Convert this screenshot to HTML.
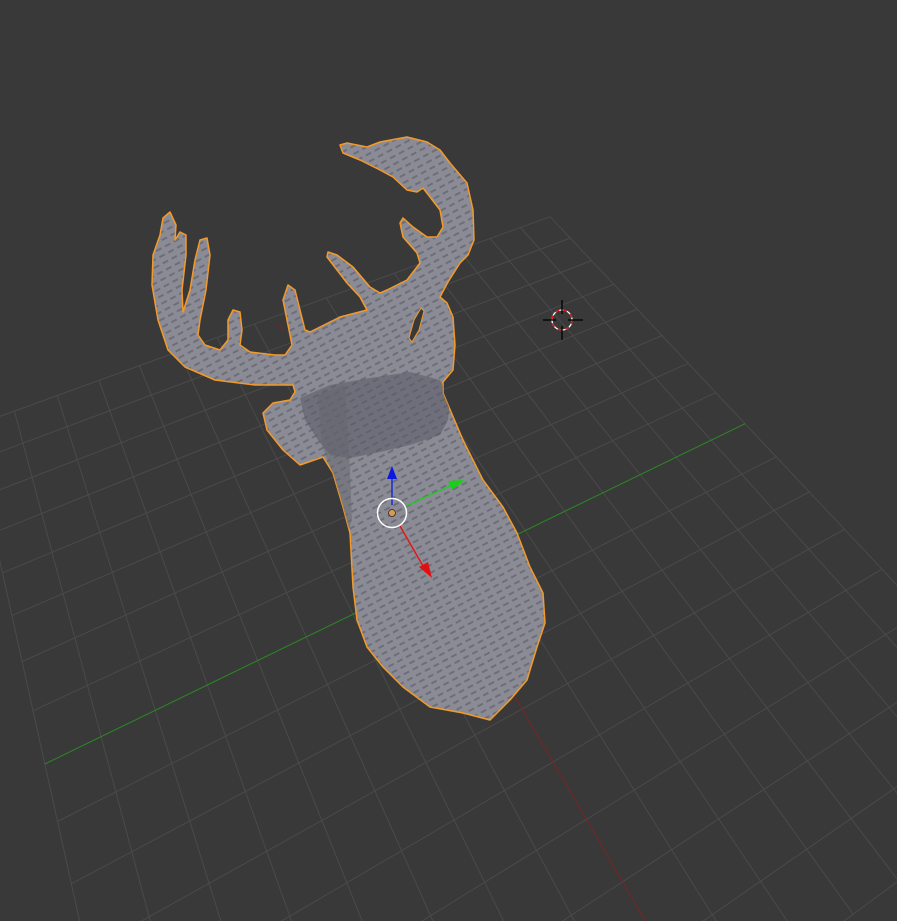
<!DOCTYPE html>
<html><head><meta charset="utf-8"><style>
html,body{margin:0;padding:0;background:#393939;width:897px;height:921px;overflow:hidden}
svg{display:block}
</style></head><body>
<svg id="s" width="897" height="921" viewBox="0 0 897 921" xmlns="http://www.w3.org/2000/svg">
<defs>
<pattern id="vox" width="10" height="7" patternUnits="userSpaceOnUse" patternTransform="rotate(-28)">
<rect width="10" height="7" fill="#8b8b95"/>
<rect x="0" y="0" width="6" height="2" fill="#6e6e7a"/>
</pattern>
<clipPath id="dc"><use href="#deer"/></clipPath>
</defs>
<rect width="897" height="921" fill="#393939"/>
<g id="grid" stroke="#4a4a4a" stroke-width="1" fill="none"></g>
<g id="axes" fill="none"></g>
<path id="deer" fill="url(#vox)" stroke="#f39a2a" stroke-width="1.5" stroke-linejoin="round" d="
M293,385 L255,385 L215,380 L185,367 L168,350 L158,320 L152,285 L153,255 L160,235 L163,218 L170,212 L176,225 L175,240 L180,232 L186,235 L186,255 L182,290 L183,312 L190,290 L195,260 L200,240 L207,238 L210,255 L206,290 L200,320 L198,335 L205,345 L220,350 L228,340 L228,320 L233,310 L240,312 L242,330 L240,345 L250,352 L275,355 L285,355 L292,345 L287,320 L283,300 L288,285 L295,290 L300,310 L305,330 L310,332
L340,317 L367,310 L360,297 L347,283 L337,270 L327,257 L328,252 L337,255 L353,267 L370,287 L380,293 L387,290 L407,280 L420,263 L417,253 L403,237 L400,223 L403,218 L413,227 L427,237 L437,237 L443,227 L440,210 L430,197 L423,188 L417,192 L407,190 L393,177 L380,170 L360,160 L343,153 L340,145 L347,143 L367,147 L380,142 L407,137 L427,142 L440,150 L450,163 L467,183 L473,210 L474,240 L468,255 L460,263 L448,282 L440,297
L447,303 L453,317 L455,345 L453,370 L443,382 L443,393 L463,440 L483,480 L503,507 L517,533 L530,567 L543,593 L545,623 L537,647 L527,680 L510,700 L490,720 L463,713 L430,707 L403,687 L383,667 L367,647 L357,620 L353,587 L350,533 L343,507 L333,473 L323,457
L300,465 L283,450 L267,430 L263,413 L273,403 L290,400 L295,392 Z"/>
<g clip-path="url(#dc)">
<path fill="#5a5a66" opacity="0.55" d="M300,398 L330,385 L370,378 L410,372 L440,380 L450,400 L448,420 L440,435 L410,445 L380,452 L350,458 L330,455 L318,440 L305,420 Z"/>
<path fill="#66666e" opacity="0.5" d="M318,395 L345,385 L350,470 L352,520 L345,540 L335,480 L322,445 Z"/>
</g>
<path fill="#393939" stroke="#f39a2a" stroke-width="1" d="M409,338 L414,320 L421,308 L424,311 L419,330 L412,342 Z"/>
<line x1="278" y1="323" x2="284" y2="332" stroke="#7a2424" stroke-width="1"/>
<g>
<line x1="392" y1="505" x2="392" y2="478" stroke="#1a2bd0" stroke-width="1.5"/>
<path d="M392,466 L387,479 L397,479 Z" fill="#0a18e0"/>
<line x1="406" y1="506" x2="450" y2="486" stroke="#24c824" stroke-width="1.5"/>
<path d="M465,480 L448,481 L452,490 Z" fill="#18d018"/>
<line x1="400" y1="526" x2="423" y2="566" stroke="#e01818" stroke-width="1.5"/>
<path d="M432,578 L419,567 L428,562 Z" fill="#e01010"/>
<circle cx="392" cy="513" r="14.5" fill="none" stroke="#ffffff" stroke-width="1.5"/>
<circle cx="392" cy="513" r="3.5" fill="#d49a5a" stroke="#402010" stroke-width="0.8"/>
</g>
<g>
<circle cx="562" cy="320" r="10" fill="none" stroke="#ffffff" stroke-width="1.3"/>
<circle cx="562" cy="320" r="10" fill="none" stroke="#e01010" stroke-width="1.3" stroke-dasharray="4 4"/>
<line x1="562" y1="300" x2="562" y2="314" stroke="#000" stroke-width="1.3"/>
<line x1="562" y1="326" x2="562" y2="340" stroke="#000" stroke-width="1.3"/>
<line x1="543" y1="320" x2="556" y2="320" stroke="#000" stroke-width="1.3"/>
<line x1="568" y1="320" x2="583" y2="320" stroke="#000" stroke-width="1.3"/>
</g>
</svg>
<script>
(function(){
var O=[442,571],VA=[3000,-672],VB=[-269,-653],s1=0.0168,s2=0.03375;
function P(u,v){var a=u*s1,b=v*s2,w=1+a+b;return [(O[0]+a*VA[0]+b*VB[0])/w,(O[1]+a*VA[1]+b*VB[1])/w];}
var g=document.getElementById('grid'),ax=document.getElementById('axes'),NS='http://www.w3.org/2000/svg';
function L(p,q,par,col,w){var l=document.createElementNS(NS,'line');l.setAttribute('x1',p[0].toFixed(1));l.setAttribute('y1',p[1].toFixed(1));l.setAttribute('x2',q[0].toFixed(1));l.setAttribute('y2',q[1].toFixed(1));if(col){l.setAttribute('stroke',col);l.setAttribute('stroke-width',w);}par.appendChild(l);}
for(var k=-8;k<=8;k++){ if(k===0)continue; L(P(k,-8),P(k,8),g); L(P(-8,k),P(8,k),g); }
L(P(0,-8),P(0,8),ax,'#7a2424',1);
L(P(-8,0),P(8,0),ax,'#2a8a22',1);
})();
</script>
</body></html>
